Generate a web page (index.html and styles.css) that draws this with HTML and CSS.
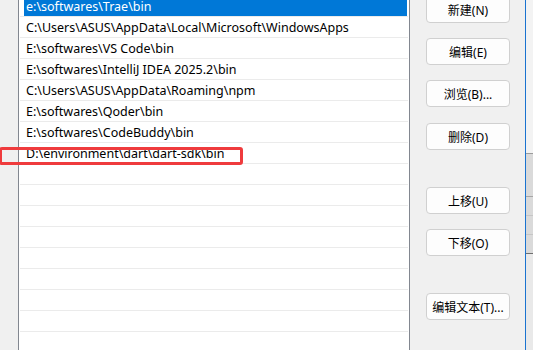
FILE: index.html
```html
<!DOCTYPE html>
<html lang="zh-CN">

<head>
    <meta charset="UTF-8">
    <title>编辑环境变量</title>
    <link rel="stylesheet" href="styles.css">
</head>

<body>
    <div class="dialog">
        <div class="gutter"></div>

        <div class="path-list">
            <div class="row selected"><span class="cell">e:\softwares\Trae\bin</span></div>
            <div class="row"><span class="cell">C:\Users\ASUS\AppData\Local\Microsoft\WindowsApps</span></div>
            <div class="row"><span class="cell">E:\softwares\VS Code\bin</span></div>
            <div class="row"><span class="cell">E:\softwares\IntelliJ IDEA 2025.2\bin</span></div>
            <div class="row"><span class="cell">C:\Users\ASUS\AppData\Roaming\npm</span></div>
            <div class="row"><span class="cell">E:\softwares\Qoder\bin</span></div>
            <div class="row"><span class="cell">E:\softwares\CodeBuddy\bin</span></div>
            <div class="row"><span class="cell">D:\environment\dart\dart-sdk\bin</span></div>
            <div class="row"><span class="cell"></span></div>
            <div class="row"><span class="cell"></span></div>
            <div class="row"><span class="cell"></span></div>
            <div class="row"><span class="cell"></span></div>
            <div class="row"><span class="cell"></span></div>
            <div class="row"><span class="cell"></span></div>
            <div class="row"><span class="cell"></span></div>
            <div class="row"><span class="cell"></span></div>
            <div class="row"><span class="cell"></span></div>
        </div>

        <div class="actions">
            <button type="button">新建(N)</button>
            <button type="button">编辑(E)</button>
            <button type="button">浏览(B)...</button>
            <button type="button" class="nudge">删除(D)</button>
            <button type="button" class="spaced">上移(U)</button>
            <button type="button">下移(O)</button>
            <button type="button" class="spaced">编辑文本(T)...</button>
        </div>

        <div class="frame-edge"></div>

        <div class="behind">
            <div class="behind-top"></div>
            <div class="behind-grid">
                <div class="grid-row"></div>
                <div class="grid-row"></div>
                <div class="grid-row"></div>
                <div class="grid-row"></div>
            </div>
            <div class="behind-bottom"></div>
        </div>

        <div class="highlight-mark"></div>
    </div>
</body>

</html>
```

FILE: styles.css
```css
body {
    margin: 0;
    background: #f0f0f0;
    font-family: "Noto Sans", "Noto Sans CJK SC", sans-serif;
    font-size: 12px;
    color: #000;
    overflow: hidden;
}

.dialog {
    position: relative;
    display: flex;
    width: 533px;
    height: 350px;
    overflow: hidden;
}

.gutter {
    width: 18px;
    flex: none;
}

.path-list {
    width: 392px;
    flex: none;
    box-sizing: border-box;
    border-left: 1px solid #828790;
    border-right: 1px solid #828790;
    background: #fff;
    padding: 0 1px;
    margin-top: -4px;
    height: 380px;
}

.row {
    height: 20px;
    border-bottom: 1px solid #ebebeb;
    display: flex;
}

.cell {
    flex: 1;
    margin: 0 1px 0 4px;
    padding-left: 2px;
    font-size: 12.5px;
    line-height: 21px;
    white-space: nowrap;
}

.selected .cell {
    background: #0078d7;
    color: #fff;
}

.actions {
    width: 84px;
    flex: none;
    margin-left: 16px;
    margin-top: -4px;
    display: flex;
    flex-direction: column;
}

.actions button {
    height: 27px;
    margin-bottom: 15px;
    padding: 0;
    font-family: "Noto Sans", "Noto Sans CJK SC", sans-serif;
    font-size: 12px;
    color: #000;
    background: #fdfdfd;
    border: 1px solid #d0d0d0;
    border-radius: 4px;
}

.actions .nudge {
    margin-top: 1px;
}

.actions .spaced {
    margin-top: 22px;
}

.frame-edge {
    width: 1px;
    flex: none;
    margin-left: 15px;
    background: #1a73d0;
}

.behind {
    flex: 1;
    display: flex;
    flex-direction: column;
    background: #f3f3f3;
}

.behind-top {
    height: 153px;
}

.behind-grid {
    border-top: 1px solid #9c9c9c;
    border-bottom: 1px solid #6f6f6f;
    background: #dadada;
    display: flex;
    flex-direction: column;
}

.grid-row {
    height: 18px;
    border-bottom: 1px solid #c6c6c6;
}

.grid-row:first-child {
    height: 42px;
    border-bottom-color: #a6a6a6;
}

.grid-row:last-child {
    border-bottom: none;
}

.behind-bottom {
    flex: 1;
    background: #e9e9e9;
}

.highlight-mark {
    position: absolute;
    left: -1px;
    top: 147px;
    width: 244px;
    height: 18px;
    box-sizing: border-box;
    border: 3px solid #ef3b3d;
    border-radius: 3px;
}
```
